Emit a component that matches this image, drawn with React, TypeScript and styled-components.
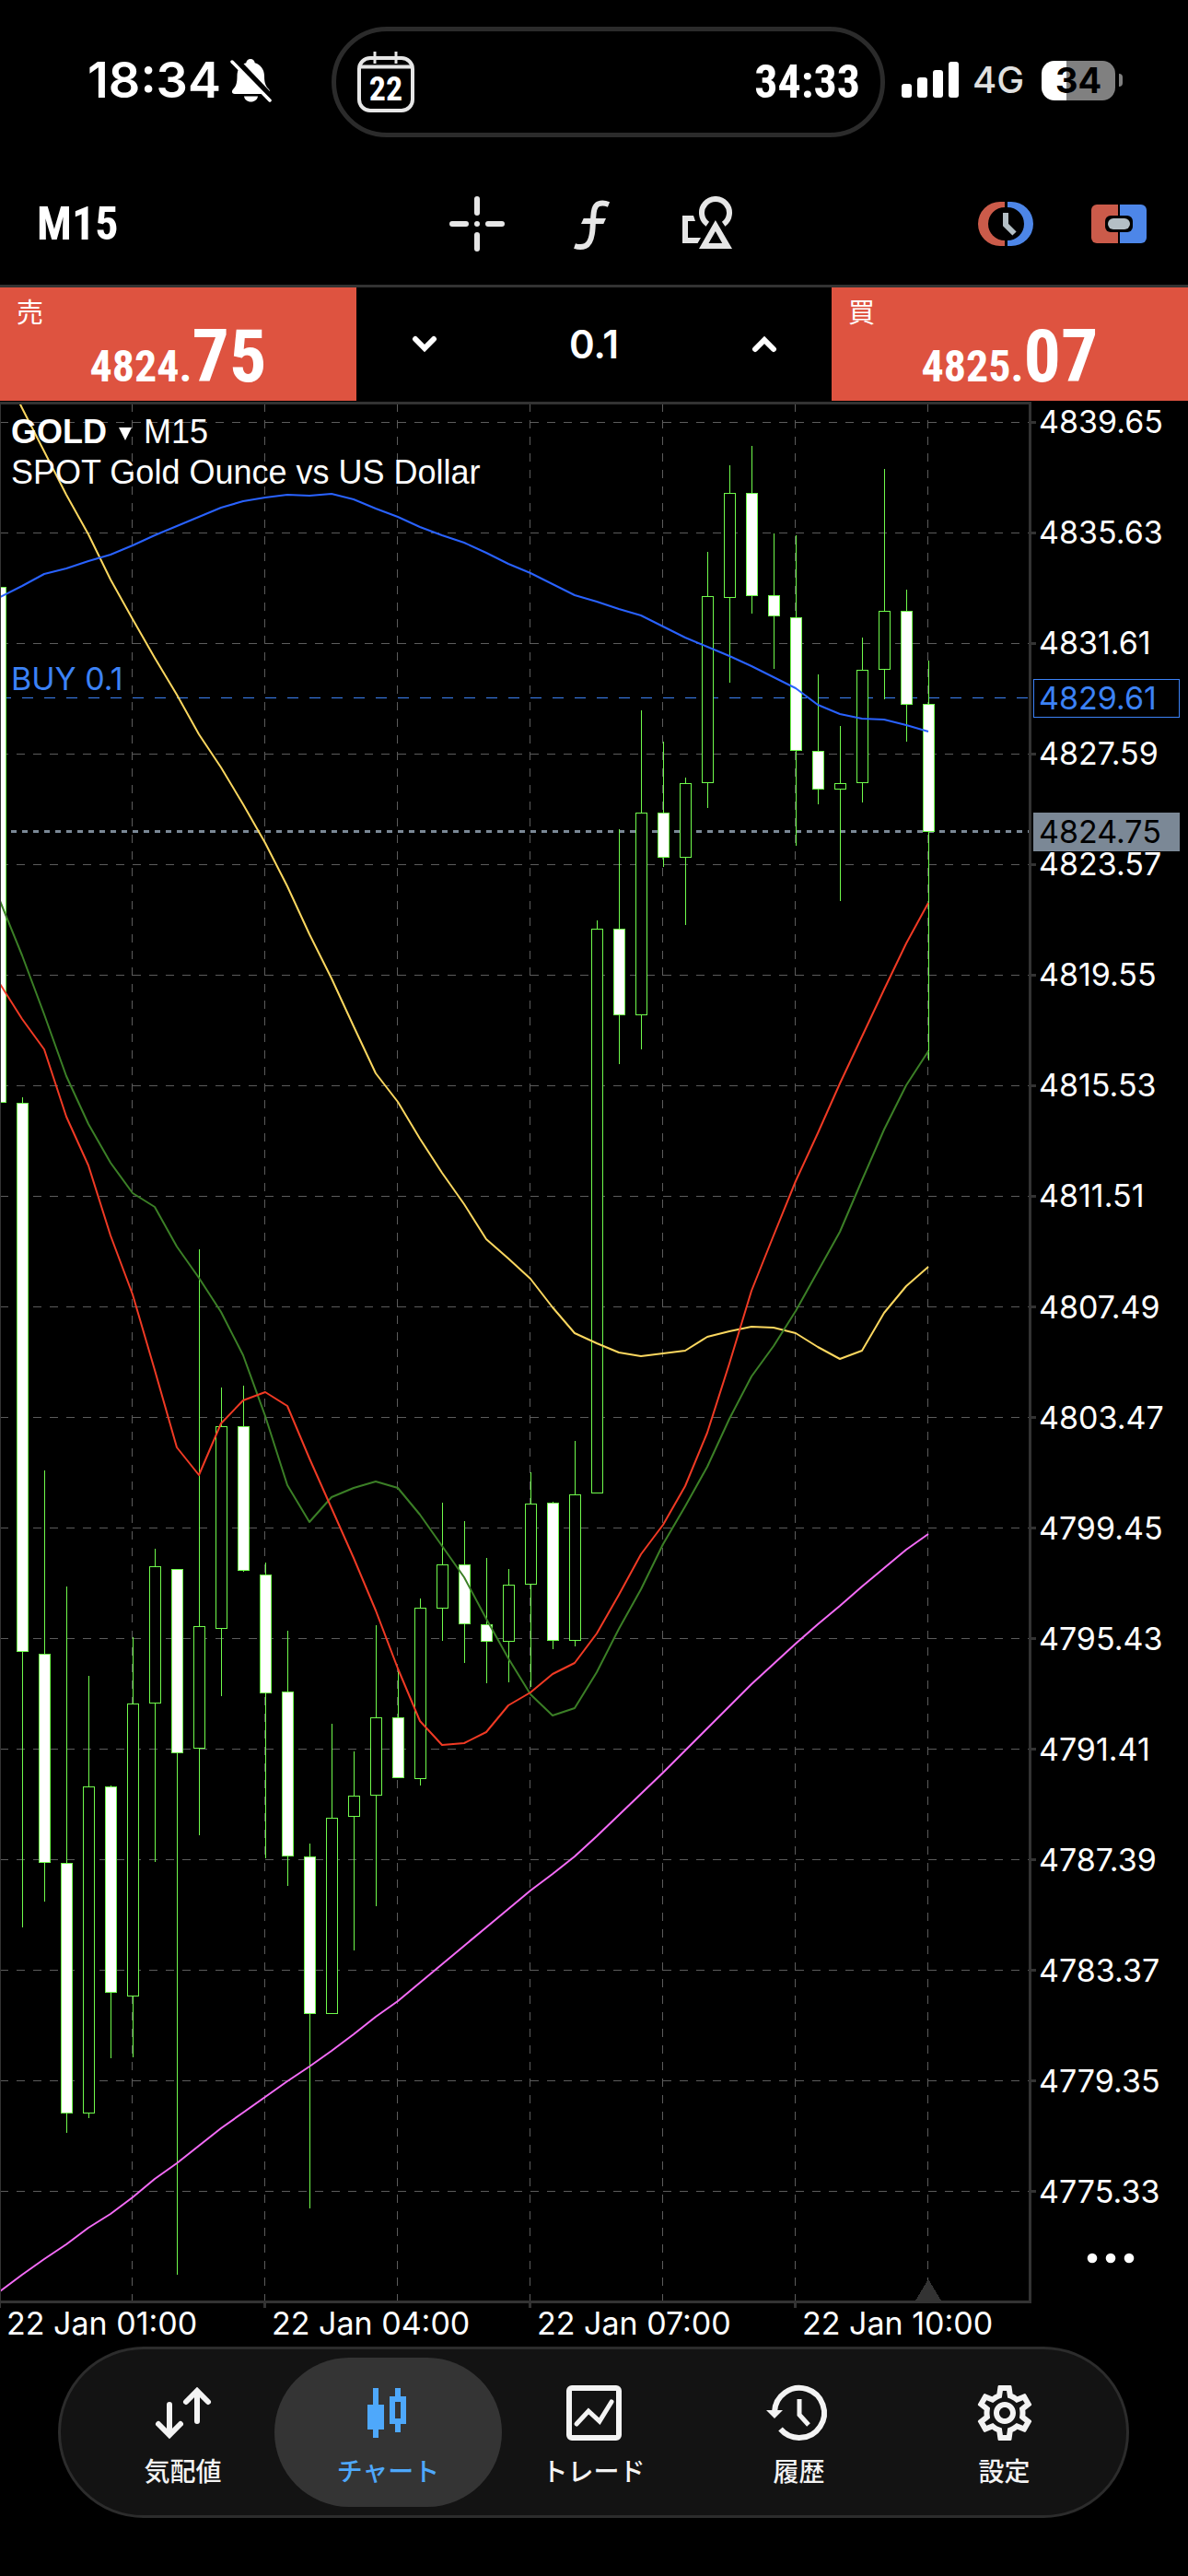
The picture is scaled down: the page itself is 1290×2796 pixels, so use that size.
import React from "react";
import styled, { createGlobalStyle, css } from "styled-components";
import { MdOutlineSettings } from "react-icons/md";

const narrow = `"Liberation Sans Narrow", "Roboto Condensed", "Open Sans Condensed", "DejaVu Sans Condensed", sans-serif`;
const ui = `Inter, "Noto Sans CJK JP", sans-serif`;

const color = {
  line: "#333333",
  grid: "#5c5c5c",
  sell: "#de5340",
  order: "#3c82f6",
  bid: "#7b8896",
  candle: "#70fb4c",
  icon: "#e6e6e6",
  accent: "#4ea8fb",
};

const Global = createGlobalStyle`
  * { box-sizing: border-box; }
  body { margin: 0; background: #000; color: #fff; font-family: ${ui}; }
  button { font: inherit; color: inherit; background: none; border: 0; padding: 0; cursor: pointer; }
`;

const Page = styled.div`
  display: flex;
  flex-direction: column;
  min-height: 100vh;
  background: #000;
`;

/* ---------- status bar ---------- */

const StatusBar = styled.header`
  display: flex;
  align-items: flex-start;
  height: 178px;
  padding-top: 29px;
`;

const StatusSide = styled.div<{ $width: number; $pad: number; $gap: number }>`
  flex: none;
  display: flex;
  align-items: center;
  width: ${(p) => p.$width}px;
  height: 116px;
  padding-left: ${(p) => p.$pad}px;
  gap: ${(p) => p.$gap}px;
`;

const Clock = styled.time`
  font-size: 54px;
  line-height: 60px;
  font-weight: 600;
`;

const Island = styled.div`
  flex: 1;
  display: flex;
  align-items: center;
  justify-content: space-between;
  height: 120px;
  padding: 0 22px;
  border: 5px solid #2b2b2b;
  border-radius: 60px;
`;

const Countdown = styled.span`
  font-family: ${narrow};
  font-size: 50px;
  line-height: 60px;
  font-weight: 700;
`;

const CalendarBadge = styled.div`
  position: relative;
  width: 64px;
  height: 66px;
  svg { display: block; }
`;

const CalendarDay = styled.span`
  position: absolute;
  inset: 20px 0 0;
  text-align: center;
  font-family: ${narrow};
  font-size: 36px;
  line-height: 42px;
  font-weight: 700;
`;

const Network = styled.span`
  color: #e0e0e0;
  font-size: 40px;
  line-height: 44px;
  font-weight: 500;
`;

const Battery = styled.div`
  position: relative;
  width: 80px;
  height: 43px;
  margin-left: 4px;
  border-radius: 14px;
  background: linear-gradient(90deg, #fff 34%, #808080 34%);
  color: #000;
  font-size: 38px;
  line-height: 43px;
  font-weight: 700;
  text-align: center;
  &::after {
    content: "";
    position: absolute;
    left: 84px;
    top: 14px;
    width: 4px;
    height: 14px;
    border-radius: 0 4px 4px 0;
    background: #808080;
  }
`;

/* ---------- toolbar ---------- */

const Toolbar = styled.div`
  display: grid;
  grid-template-columns: 1fr auto 1fr;
  align-items: center;
  height: 134px;
  padding: 0 45px 2px 40px;
  border-bottom: 3px solid ${color.line};
`;

const Timeframe = styled.button`
  justify-self: start;
  font-family: ${narrow};
  font-size: 50px;
  line-height: 60px;
  font-weight: 700;
`;

const ToolGroup = styled.div<{ $end?: boolean }>`
  display: flex;
  gap: ${(p) => (p.$end ? 63 : 65)}px;
  justify-self: ${(p) => (p.$end ? "end" : "center")};
`;

const ToolButton = styled.button`
  width: 60px;
  height: 60px;
  color: ${color.icon};
  svg { display: block; }
`;

/* ---------- one-click trading ---------- */

const TradeBar = styled.section`
  display: grid;
  grid-template-columns: 3fr 4fr 3fr;
  height: 123px;
  margin-bottom: 1px;
`;

const PriceButton = styled.button`
  display: flex;
  flex-direction: column;
  align-items: center;
  background: ${color.sell};
`;

const Side = styled.span`
  align-self: flex-start;
  padding: 10px 0 0 18px;
  font-family: "Noto Sans CJK JP", sans-serif;
  font-size: 29px;
  line-height: 30px;
  font-weight: 400;
`;

const Quote = styled.span`
  font-family: ${narrow};
  font-size: 48px;
  line-height: 70px;
  font-weight: 700;
`;

const Pips = styled.span`
  font-size: 80px;
  line-height: 70px;
`;

const Volume = styled.div`
  display: grid;
  grid-template-columns: 147px 1fr 147px;
`;

const VolumeInput = styled.input`
  width: 100%;
  min-width: 0;
  border: 0;
  padding: 0;
  background: none;
  color: #fff;
  text-align: center;
  font-family: ${ui};
  font-size: 42px;
  line-height: 50px;
  font-weight: 600;
`;

const Step = styled.button`
  display: grid;
  place-items: center;
`;

/* ---------- chart ---------- */

const Chart = styled.main`
  position: relative;
  display: grid;
  grid-template-columns: 1125fr 165fr;
`;

const Plot = styled.svg`
  display: block;
  width: 100%;
  height: auto;
`;

const AxisColumn = styled.div`
  display: flex;
  flex-direction: column;
  padding-top: 2px;
`;

const axisText = css`
  font-family: ${ui};
  font-size: 34px;
  line-height: 40px;
`;

const PriceAxis = styled.ol`
  ${axisText}
  flex: 1;
  display: flex;
  flex-direction: column;
  justify-content: space-between;
  margin: 0;
  padding: 0 0 0 3px;
  list-style: none;
`;

const MoreButton = styled.button`
  height: 106px;
  padding: 0 0 2px;
  svg { display: block; margin: 0 0 0 53px; }
`;

const PriceTag = styled.span<{ $at: number; $filled?: boolean }>`
  ${axisText}
  position: absolute;
  right: 9px;
  top: ${(p) => p.$at}%;
  width: 159px;
  height: 42px;
  padding-left: 5px;
  transform: translateY(-50%);
  border: 1px solid ${(p) => (p.$filled ? color.bid : color.order)};
  background: ${(p) => (p.$filled ? color.bid : "#000")};
  color: ${(p) => (p.$filled ? "#000" : color.order)};
`;

const ChartTitle = styled.div`
  position: absolute;
  left: 12px;
  top: 11px;
  font-family: "Liberation Sans", sans-serif;
  font-size: 36px;
  line-height: 44px;
`;

const SymbolButton = styled.button`
  display: flex;
  align-items: center;
  gap: 13px;
  svg { display: block; margin-top: 4px; }
`;

const OrderLabel = styled.span<{ $at: number }>`
  ${axisText}
  position: absolute;
  left: 12px;
  top: ${(p) => p.$at}%;
  transform: translateY(-100%);
  color: ${color.order};
`;

const TimeAxis = styled.ol`
  display: grid;
  grid-template-columns: repeat(4, 288fr) 138fr;
  margin: 0;
  padding: 0 0 8px;
  list-style: none;
  font-size: 34px;
  line-height: 34px;
  li { padding-left: 7px; white-space: nowrap; }
`;

/* ---------- tab bar ---------- */

const TabBar = styled.nav`
  display: flex;
  height: 186px;
  margin: 0 64px 63px 63px;
  padding: 9px;
  border: 3px solid #2c2c2c;
  border-radius: 93px;
  background: #131313;
`;

const Tab = styled.a<{ $active?: boolean }>`
  flex: 1;
  display: flex;
  flex-direction: column;
  align-items: center;
  padding-top: 30px;
  gap: 14px;
  border-radius: 81px;
  background: ${(p) => (p.$active ? "#343434" : "transparent")};
  color: ${(p) => (p.$active ? color.accent : "#f3f3f3")};
  font-family: "Noto Sans CJK JP", sans-serif;
  font-size: 28px;
  line-height: 36px;
  font-weight: 500;
  text-decoration: none;
  & + & { margin-left: -24px; }
`;

const TabIcon = styled.span`
  display: flex;
  align-items: center;
  justify-content: center;
  width: 60px;
  height: 60px;
  svg { flex: none; overflow: visible; }
`;

/* ---------- data ---------- */

// [high, body top, body bottom, low, filled] in chart units, one bar every 24 units
const candles: [number, number, number, number, number][] = [
  [637, 637, 1196, 1196, 1],
  [1191, 1197, 1792, 2092, 1],
  [1596, 1795, 2021, 2064, 1],
  [1722, 2022, 2293, 2315, 1],
  [1819, 1939, 2293, 2299, 0],
  [1938, 1939, 2162, 2234, 1],
  [1777, 1849, 2166, 2233, 0],
  [1681, 1700, 1848, 2021, 0],
  [1703, 1703, 1902, 2469, 1],
  [1356, 1765, 1897, 1992, 0],
  [1506, 1548, 1767, 1841, 0],
  [1504, 1548, 1704, 1706, 1],
  [1696, 1709, 1837, 2017, 1],
  [1770, 1836, 2014, 2047, 1],
  [2001, 2015, 2185, 2397, 1],
  [1871, 1973, 2185, 2185, 0],
  [1901, 1949, 1971, 2117, 0],
  [1764, 1864, 1948, 2069, 0],
  [1811, 1864, 1929, 1930, 1],
  [1735, 1745, 1930, 1938, 0],
  [1631, 1698, 1745, 1781, 0],
  [1651, 1698, 1762, 1805, 1],
  [1691, 1763, 1781, 1827, 1],
  [1703, 1720, 1781, 1826, 0],
  [1598, 1632, 1719, 1831, 0],
  [1630, 1631, 1780, 1790, 1],
  [1564, 1622, 1780, 1787, 0],
  [999, 1008, 1620, 1620, 0],
  [900, 1008, 1101, 1155, 1],
  [771, 882, 1101, 1139, 0],
  [805, 882, 930, 941, 1],
  [844, 850, 930, 1004, 0],
  [599, 647, 849, 877, 0],
  [505, 535, 648, 741, 0],
  [484, 535, 646, 666, 1],
  [579, 646, 668, 726, 1],
  [581, 670, 814, 918, 1],
  [732, 815, 856, 873, 1],
  [788, 850, 856, 978, 0],
  [692, 727, 849, 871, 0],
  [509, 663, 726, 759, 0],
  [640, 663, 764, 805, 1],
  [717, 764, 902, 1151, 1],
];

const averages = [
  {
    stroke: "#f46bf7",
    ys: [2487, 2469, 2452, 2436, 2418, 2403, 2385, 2365, 2348, 2329, 2310, 2293, 2276, 2259, 2243, 2226, 2208, 2189, 2172, 2152, 2132, 2112, 2092, 2072, 2052, 2034, 2015, 1993, 1970, 1947, 1924, 1900, 1876, 1852, 1828, 1806, 1784, 1763, 1743, 1722, 1702, 1682, 1665],
  },
  {
    stroke: "#fbd75f",
    ys: [394, 443, 490, 537, 580, 629, 672, 714, 754, 797, 833, 873, 915, 962, 1014, 1062, 1114, 1165, 1196, 1236, 1273, 1307, 1345, 1366, 1388, 1419, 1447, 1458, 1468, 1472, 1469, 1466, 1451, 1445, 1440, 1441, 1447, 1462, 1475, 1466, 1425, 1396, 1375],
  },
  {
    stroke: "#2962ff",
    ys: [648, 636, 623, 617, 609, 602, 592, 581, 571, 561, 551, 544, 540, 537, 538, 536, 542, 552, 561, 572, 581, 589, 600, 612, 622, 634, 646, 653, 661, 668, 680, 692, 702, 712, 723, 735, 747, 765, 775, 780, 781, 787, 794],
  },
  {
    stroke: "#3b7f26",
    ys: [978, 1037, 1101, 1168, 1220, 1262, 1295, 1310, 1353, 1387, 1424, 1471, 1537, 1612, 1652, 1625, 1615, 1608, 1615, 1644, 1678, 1712, 1757, 1800, 1839, 1862, 1854, 1815, 1768, 1725, 1676, 1635, 1592, 1540, 1494, 1461, 1423, 1380, 1337, 1281, 1226, 1178, 1141],
  },
  {
    stroke: "#f03a24",
    ys: [1068, 1106, 1139, 1212, 1265, 1341, 1405, 1487, 1571, 1601, 1545, 1520, 1511, 1526, 1583, 1637, 1691, 1748, 1811, 1868, 1894, 1892, 1880, 1851, 1837, 1817, 1805, 1773, 1731, 1687, 1655, 1613, 1555, 1480, 1401, 1341, 1282, 1230, 1176, 1125, 1074, 1024, 980],
  },
];

const TOP = 436;
const HEIGHT = 2069;
const prices = Array.from({ length: 17 }, (_, i) => (4839.65 - i * 4.02).toFixed(2));
const times = ["22 Jan 01:00", "22 Jan 04:00", "22 Jan 07:00", "22 Jan 10:00"];
const gridX = [143, 287, 431, 575, 719, 863, 1007];
const percent = (y: number) => ((y - TOP) / HEIGHT) * 100;

function PricePlot() {
  return (
    <Plot viewBox={`0 ${TOP} 1125 ${HEIGHT}`} role="img" aria-label="GOLD M15">
      <g shapeRendering="crispEdges">
        <g stroke={color.grid} strokeDasharray="9 9">
          {prices.map((p, i) => (
            <path key={p} d={`M0 ${458.5 + i * 120}H1117`} />
          ))}
          {gridX.map((x) => (
            <path key={x} d={`M${x + 0.5} 438V2497`} />
          ))}
        </g>
        <path d="M0 757.5H1117" stroke={color.order} strokeDasharray="12 12" />
        <path d="M12 902.5H1117" stroke={color.bid} strokeWidth="3" strokeDasharray="6 6" />
        <path d="M994 2497L1008 2474L1022 2497Z" fill={color.line} />
        <g stroke={color.candle}>
          {candles.map(([high, top, bottom, low, filled], i) => (
            <g key={i}>
              <path d={`M${i * 24 + 0.5} ${high}V${low}`} />
              <rect
                x={i * 24 - 5.5}
                y={top + 0.5}
                width="12"
                height={bottom - top}
                fill={filled ? "#fff" : "#000"}
              />
            </g>
          ))}
        </g>
      </g>
      <g fill="none" strokeWidth="2" strokeLinejoin="round">
        {averages.map((a) => (
          <polyline key={a.stroke} stroke={a.stroke} points={a.ys.map((y, i) => `${i * 24},${y}`).join(" ")} />
        ))}
      </g>
      <g fill={color.line} shapeRendering="crispEdges">
        <rect x="0" y="436" width="1120" height="3" />
        <rect x="0" y="2497" width="1120" height="3" />
        <rect x="1117" y="436" width="3" height="2064" />
        <rect x="0" y="436" width="1" height="2069" />
        {prices.map((p, i) => (
          <rect key={p} x="1120" y={457 + i * 120} width="5" height="3" />
        ))}
        {[286, 574, 862].map((x) => (
          <rect key={x} x={x} y="2500" width="3" height="5" />
        ))}
      </g>
    </Plot>
  );
}

/* ---------- icons ---------- */

const BellOff = () => (
  <svg width="46" height="48" viewBox="0 0 46 48" aria-hidden="true">
    <path
      fill="#fff"
      d="M22 1c2.600 0 4.500 1.800 4.700 4.200C33 7 37 12.500 37 19.500c0 8.500 2 11.500 5 14.500 2 2.200 1.200 5-2 5H5c-3.200 0-4-2.800-2-5 3-3 4.500-6 4.500-14.500C7.500 12.500 11 7 17.300 5.200 17.500 2.800 19.400 1 22 1ZM15 41.500h15c-.5 3.500-3.600 6-7.500 6s-7-2.500-7.500-6Z"
    />
    <path d="M4 1L45 44" stroke="#000" strokeWidth="8" />
    <path d="M2 4L43 46" stroke="#fff" strokeWidth="3.500" strokeLinecap="round" />
  </svg>
);

const CalendarIcon = () => (
  <svg width="64" height="66" viewBox="0 0 64 66" fill="none" stroke={color.icon} strokeWidth="4" aria-hidden="true">
    <rect x="3" y="7" width="58" height="57" rx="12" />
    <path d="M3 16.500H61" />
    <path d="M20 0V13M43 0V13" strokeWidth="3" />
  </svg>
);

const Signal = () => (
  <svg width="62" height="40" viewBox="0 0 62 40" fill="#fff" aria-hidden="true">
    <rect x="0" y="24" width="11" height="15" rx="3" />
    <rect x="17" y="17" width="11" height="22" rx="3" />
    <rect x="34" y="9" width="11" height="30" rx="3" />
    <rect x="51" y="0" width="11" height="39" rx="3" />
  </svg>
);

const Crosshair = () => (
  <svg width="60" height="60" viewBox="0 0 60 60" stroke="currentColor" strokeWidth="6" strokeLinecap="round">
    <path d="M30 3V18M30 42V57M3 30H18M42 30H57M30 30V30.010" />
  </svg>
);

const FunctionIcon = () => (
  <svg width="60" height="60" viewBox="0 0 60 60" fill="none">
    <path
      d="M48 9C44 7.400 40 7.200 37 8.300C32.500 10 31.600 16 31.200 23L30.600 34C30 45 28 51.500 22.500 54C19 55.500 15 55.300 11 54"
      stroke="currentColor"
      strokeWidth="6"
    />
    <path d="M18 30L20.700 24H45L42.300 30Z" fill="currentColor" />
  </svg>
);

const Shapes = () => (
  <svg width="60" height="60" viewBox="0 0 60 60" fill="currentColor">
    <path d="M30.300 30.200A15 15 0 1 1 47.700 30.200" fill="none" stroke="currentColor" strokeWidth="6" />
    <path fillRule="evenodd" d="M38.900 26L57 57H21ZM38.900 38L31.500 51H46.200Z" />
    <path d="M3 21H15L17 27H9V45H23L19.500 51H3Z" />
  </svg>
);

const SessionClock = () => (
  <svg width="60" height="60" viewBox="0 0 60 60" fill="none">
    <path fill="#cb5b4a" d="M29 6H24A24 24 0 0 0 24 54H29V48A18 18 0 0 1 29 12Z" />
    <path fill="#4d86e8" d="M32 6H36A24 24 0 0 1 36 54H32V48A18 18 0 0 0 32 12Z" />
    <path d="M30 18V31L39.500 40.500" stroke="#b4bfc5" strokeWidth="6" />
  </svg>
);

const OneClick = () => (
  <svg width="60" height="60" viewBox="0 0 60 60">
    <path fill="#cb5b4a" d="M29 9H6A6 6 0 0 0 0 15V45A6 6 0 0 0 6 51H29Z" />
    <path fill="#4d86e8" d="M31 9H54A6 6 0 0 1 60 15V45A6 6 0 0 1 54 51H31Z" />
    <rect x="15" y="21" width="30" height="18" rx="6" fill="#000" />
    <rect x="18" y="24" width="24" height="12" rx="6" fill="#b4bfc5" />
  </svg>
);

const Chevron = ({ up }: { up?: boolean }) => (
  <svg width="28" height="20" viewBox="0 0 28 20" fill="none" stroke="#fff" strokeWidth="6" strokeLinecap="round">
    <path d={up ? "M4 15L14 5L24 15" : "M4 4L14 14L24 4"} />
  </svg>
);

const QuotesIcon = () => (
  <svg width="60" height="60" viewBox="0 0 60 60" fill="none" stroke="currentColor" strokeWidth="6" strokeLinecap="round">
    <path d="M15 21V52M3 42L15 54L27 42M45 39V8M33 18L45 6L57 18" />
  </svg>
);

const CandlesIcon = () => (
  <svg width="60" height="60" viewBox="0 0 60 60" fill="currentColor">
    <path d="M13 3H19V21H25V48H19V57H13V48H7V21H13Z" />
    <path fillRule="evenodd" d="M37 3H43V12H49V42H43V51H37V42H31V12H37ZM37 18V36H43V18Z" />
  </svg>
);

const TradeIcon = () => (
  <svg width="60" height="60" viewBox="0 0 60 60" fill="none" stroke="currentColor" strokeWidth="6">
    <rect x="3" y="3" width="54" height="54" rx="3" />
    <path d="M11 42L24 28L36 39L49 18" strokeWidth="5" strokeLinecap="round" />
  </svg>
);

const HistoryIcon = () => (
  <svg width="60" height="60" viewBox="0 0 60 60" fill="none" stroke="currentColor" strokeWidth="6">
    <path d="M3 29A27 27 0 1 1 9.500 47.500" />
    <path d="M30 15V32L40 43" strokeWidth="5" />
    <path d="M-6 27H12L3 36Z" fill="currentColor" stroke="none" />
  </svg>
);

const tabs = [
  { label: "気配値", icon: <QuotesIcon /> },
  { label: "チャート", icon: <CandlesIcon />, active: true },
  { label: "トレード", icon: <TradeIcon /> },
  { label: "履歴", icon: <HistoryIcon /> },
  { label: "設定", icon: <MdOutlineSettings size={72} /> },
];

export default function App() {
  return (
    <Page>
      <Global />
      <StatusBar>
        <StatusSide $width={360} $pad={95} $gap={10}>
          <Clock>18:34</Clock>
          <BellOff />
        </StatusSide>
        <Island>
          <CalendarBadge>
            <CalendarIcon />
            <CalendarDay>22</CalendarDay>
          </CalendarBadge>
          <Countdown>34:33</Countdown>
        </Island>
        <StatusSide $width={329} $pad={18} $gap={15}>
          <Signal />
          <Network>4G</Network>
          <Battery>34</Battery>
        </StatusSide>
      </StatusBar>

      <Toolbar>
        <Timeframe>M15</Timeframe>
        <ToolGroup>
          <ToolButton aria-label="Crosshair"><Crosshair /></ToolButton>
          <ToolButton aria-label="Indicators"><FunctionIcon /></ToolButton>
          <ToolButton aria-label="Objects"><Shapes /></ToolButton>
        </ToolGroup>
        <ToolGroup $end>
          <ToolButton aria-label="Sessions"><SessionClock /></ToolButton>
          <ToolButton aria-label="One-click trading"><OneClick /></ToolButton>
        </ToolGroup>
      </Toolbar>

      <TradeBar>
        <PriceButton>
          <Side>売</Side>
          <Quote>4824.<Pips>75</Pips></Quote>
        </PriceButton>
        <Volume>
          <Step aria-label="Decrease volume"><Chevron /></Step>
          <VolumeInput aria-label="Volume" defaultValue="0.1" />
          <Step aria-label="Increase volume"><Chevron up /></Step>
        </Volume>
        <PriceButton>
          <Side>買</Side>
          <Quote>4825.<Pips>07</Pips></Quote>
        </PriceButton>
      </TradeBar>

      <Chart>
        <PricePlot />
        <AxisColumn>
          <PriceAxis>
            {prices.map((p) => (
              <li key={p}>{p}</li>
            ))}
          </PriceAxis>
          <MoreButton aria-label="More">
            <svg width="56" height="12" viewBox="0 0 56 12" fill="#fff">
              <circle cx="8" cy="6" r="5.300" />
              <circle cx="28" cy="6" r="5.300" />
              <circle cx="48" cy="6" r="5.300" />
            </svg>
          </MoreButton>
        </AxisColumn>
        <ChartTitle>
          <SymbolButton>
            <strong>GOLD</strong>
            <svg width="14" height="14" viewBox="0 0 14 14" fill="#fff" aria-hidden="true">
              <path d="M0 0H14L7 14Z" />
            </svg>
            <span>M15</span>
          </SymbolButton>
          <div>SPOT Gold Ounce vs US Dollar</div>
        </ChartTitle>
        <OrderLabel $at={percent(757)}>BUY 0.1</OrderLabel>
        <PriceTag $at={percent(758)}>4829.61</PriceTag>
        <PriceTag $at={percent(903)} $filled>4824.75</PriceTag>
      </Chart>

      <TimeAxis>
        {times.map((t) => (
          <li key={t}>{t}</li>
        ))}
      </TimeAxis>

      <TabBar>
        {tabs.map((t) => (
          <Tab key={t.label} href="#" $active={t.active} aria-current={t.active ? "page" : undefined}>
            <TabIcon>{t.icon}</TabIcon>
            {t.label}
          </Tab>
        ))}
      </TabBar>
    </Page>
  );
}
